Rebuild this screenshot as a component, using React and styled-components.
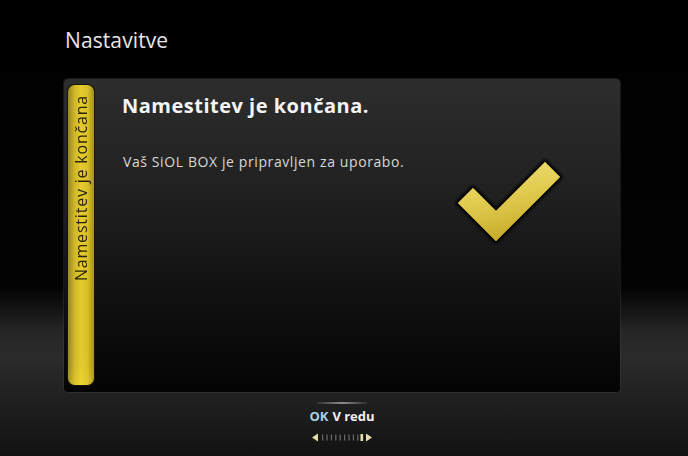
import React from "react";
import styled, { createGlobalStyle } from "styled-components";

const Global = createGlobalStyle`
  html, body { margin: 0; padding: 0; background: #000; }
  body { font-family: "Open Sans", "DejaVu Sans", sans-serif; }
`;

const Page = styled.div`
  width: 688px;
  height: 456px;
  box-sizing: border-box;
  padding: 28px 68px 0 64px;
  background: linear-gradient(
    to bottom,
    #000 0%,
    #030303 63%,
    #262626 73%,
    #2b2b2b 78%,
    #1d1d1d 90%,
    #121212 100%
  );
  display: flex;
  flex-direction: column;
  overflow: hidden;
`;

const Title = styled.h1`
  margin: 0 0 27px 1px;
  font-size: 21px;
  line-height: 24px;
  font-weight: 400;
  color: #e6e6e6;
  letter-spacing: 0.1px;
`;

const Panel = styled.section`
  height: 313px;
  box-sizing: border-box;
  padding: 6px 0 7px 4px;
  border-radius: 4px;
  background: linear-gradient(to bottom, #2d2d2d 0%, #212121 35%, #111 68%, #040404 100%);
  box-shadow: 0 0 0 1px rgba(70, 70, 70, 0.35);
  display: flex;
`;

const SideBar = styled.div`
  width: 26px;
  flex: none;
  border-radius: 7px;
  box-sizing: border-box;
  padding-top: 10px;
  background: linear-gradient(to right, #8c7b18 0%, #cdb52a 25%, #e6cd2e 50%, #d7bf2c 75%, #9a881a 100%);
  box-shadow: 0 0 0 1px #1a1605, inset 0 -10px 14px rgba(255, 230, 60, 0.25);
  display: flex;
  justify-content: center;
  align-items: flex-start;
`;

const SideLabel = styled.span`
  writing-mode: vertical-rl;
  transform: rotate(180deg);
  font-size: 16px;
  line-height: 20px;
  font-weight: 500;
  letter-spacing: 0.8px;
  color: #2a2408;
  white-space: nowrap;
`;

const Content = styled.div`
  flex: 1;
  display: flex;
  padding: 9px 0 0 28px;
`;

const TextCol = styled.div`
  flex: 1;
  display: flex;
  flex-direction: column;
`;

const Heading = styled.h2`
  margin: 0;
  font-size: 20px;
  line-height: 24px;
  font-weight: 700;
  letter-spacing: 0.5px;
  color: #f4f4f4;
`;

const Message = styled.p`
  margin: 35px 0 0 1px;
  font-size: 14px;
  line-height: 18px;
  font-weight: 500;
  color: #d8d8d8;
  letter-spacing: 0.6px;
`;

const Check = styled.svg`
  flex: none;
  width: 112px;
  height: 92px;
  margin: 62px 54px 0 0;
`;

const Footer = styled.footer`
  display: flex;
  flex-direction: column;
  align-items: center;
  padding-top: 10px;
`;

const Rule = styled.div`
  width: 50px;
  height: 2px;
  background: linear-gradient(to right, rgba(120,120,120,0.2), #8a8a8a 50%, rgba(120,120,120,0.2));
`;

const KeyLine = styled.div`
  margin-top: 4px;
  font-size: 13px;
  line-height: 16px;
  font-weight: 700;
  color: #f2f2f2;
  display: flex;
  gap: 4px;
`;

const Key = styled.span`
  color: #a9d0e8;
`;

const Scroller = styled.svg`
  margin-top: 9px;
  width: 60px;
  height: 9px;
`;

export default function App() {
  const ticks = [];
  for (let i = 0; i < 9; i++) {
    ticks.push(<rect key={i} x={10 + i * 4.4} y={1.5} width={1.2} height={6} fill="#6a6a6a" />);
  }
  return (
    <>
      <Global />
      <Page>
        <Title>Nastavitve</Title>
        <Panel>
          <SideBar>
            <SideLabel>Namestitev je končana</SideLabel>
          </SideBar>
          <Content>
            <TextCol>
              <Heading>Namestitev je končana.</Heading>
              <Message>Vaš SiOL BOX je pripravljen za uporabo.</Message>
            </TextCol>
            <Check viewBox="0 0 112 92">
              <defs>
                <linearGradient id="chk" x1="0" y1="0" x2="0.3" y2="1">
                  <stop offset="0" stopColor="#efe07a" />
                  <stop offset="0.5" stopColor="#e2cd52" />
                  <stop offset="1" stopColor="#c9ad2a" />
                </linearGradient>
                <filter id="blur" x="-20%" y="-20%" width="140%" height="140%">
                  <feGaussianBlur stdDeviation="1.5" />
                </filter>
              </defs>
              <polygon
                points="19,32 4,47 42,85 106,21 91,6 42,55"
                fill="none"
                stroke="#000"
                strokeWidth="5"
                strokeLinejoin="round"
                filter="url(#blur)"
              />
              <polygon
                points="19,32 4,47 42,85 106,21 91,6 42,55"
                fill="url(#chk)"
                stroke="#a8902a"
                strokeWidth="1"
                strokeLinejoin="round"
              />
            </Check>
          </Content>
        </Panel>
        <Footer>
          <Rule />
          <KeyLine>
            <Key>OK</Key>
            <span>V redu</span>
          </KeyLine>
          <Scroller viewBox="0 0 60 9">
            <polygon points="0,4.5 6,0.5 6,8.5" fill="#e4dcaa" />
            {ticks}
            <rect x={48.5} y={1} width={2.6} height={7} fill="#e8e0b4" />
            <polygon points="60,4.5 54,0.5 54,8.5" fill="#e4dcaa" />
          </Scroller>
        </Footer>
      </Page>
    </>
  );
}
